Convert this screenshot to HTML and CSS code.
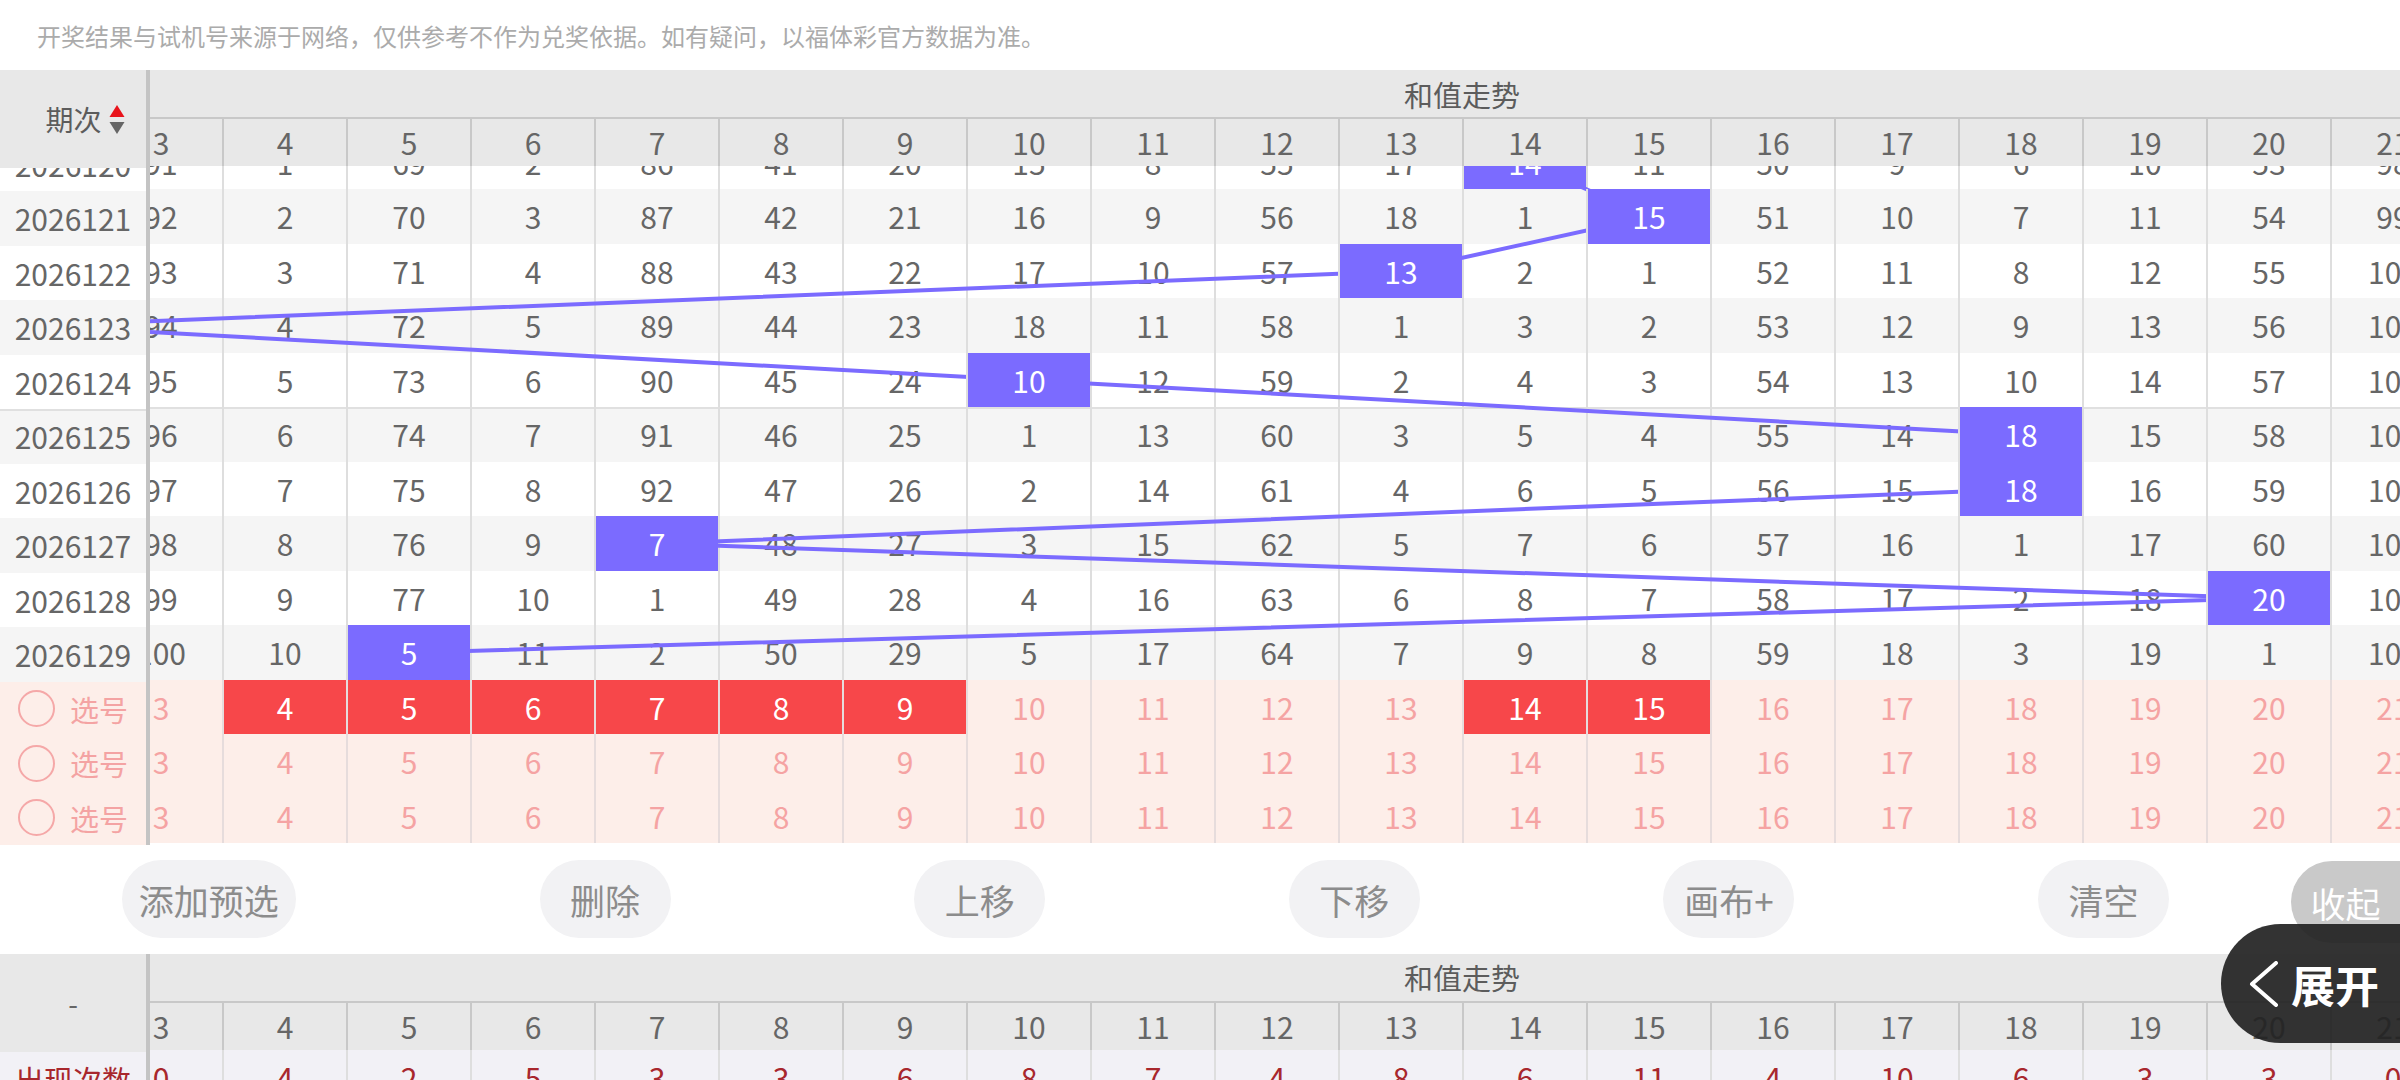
FILE: index.html
```html
<!DOCTYPE html>
<html lang="zh-CN">
<head>
<meta charset="utf-8">
<title>和值走势</title>
<link rel="stylesheet" href="styles.css">
</head>
<body>
<div class="notice">开奖结果与试机号来源于网络，仅供参考不作为兑奖依据。如有疑问，以福体彩官方数据为准。</div>

<section class="trend">
  <div class="fixed">
    <div class="fhead">
      <span class="ftitle">期次</span>
      <svg class="sort" width="16" height="30" viewBox="0 0 16 30"><polygon points="8,0 15.5,12 0.5,12" fill="#e8131b"/><polygon points="0.5,17 15.5,17 8,29" fill="#666"/></svg>
    </div>
    <div class="view">
      <div class="rows">
        <div class="fc">2026120</div>
        <div class="fc alt">2026121</div>
        <div class="fc">2026122</div>
        <div class="fc alt">2026123</div>
        <div class="fc">2026124</div>
        <div class="fc alt sep">2026125</div>
        <div class="fc">2026126</div>
        <div class="fc alt">2026127</div>
        <div class="fc">2026128</div>
        <div class="fc alt">2026129</div>
        <div class="fc pick"><span class="ring"></span>选号</div>
        <div class="fc pick"><span class="ring"></span>选号</div>
        <div class="fc pick"><span class="ring"></span>选号</div>
      </div>
    </div>
  </div>
  <div class="pane">
    <div class="inner">
      <div class="group">和值走势</div>
      <div class="nums"><i>0</i><i>1</i><i>2</i><i>3</i><i>4</i><i>5</i><i>6</i><i>7</i><i>8</i><i>9</i><i>10</i><i>11</i><i>12</i><i>13</i><i>14</i><i>15</i><i>16</i><i>17</i><i>18</i><i>19</i><i>20</i><i>21</i><i>22</i><i>23</i><i>24</i><i>25</i><i>26</i><i>27</i></div>
      <div class="view">
        <div class="rows">
          <svg class="lines" width="3472" height="545" viewBox="0 0 3472 545"><polyline points="1799,27.25 1923,81.75 1675,136.25 311,190.75 1303,245.25 2295,299.75 2295,354.25 931,408.75 2543,463.25 683,517.75" fill="none" stroke="#7b6bff" stroke-width="4" stroke-linejoin="round"/></svg>
          <div class="r"><i>132</i><i>45</i><i>33</i><i>91</i><i>1</i><i>69</i><i>2</i><i>86</i><i>41</i><i>20</i><i>15</i><i>8</i><i>55</i><i>17</i><i class="h">14</i><i>11</i><i>50</i><i>9</i><i>6</i><i>10</i><i>53</i><i>98</i><i>120</i><i>160</i><i>230</i><i>310</i><i>420</i><i>500</i></div>
          <div class="r alt"><i>133</i><i>46</i><i>34</i><i>92</i><i>2</i><i>70</i><i>3</i><i>87</i><i>42</i><i>21</i><i>16</i><i>9</i><i>56</i><i>18</i><i>1</i><i class="h">15</i><i>51</i><i>10</i><i>7</i><i>11</i><i>54</i><i>99</i><i>121</i><i>161</i><i>231</i><i>311</i><i>421</i><i>501</i></div>
          <div class="r"><i>134</i><i>47</i><i>35</i><i>93</i><i>3</i><i>71</i><i>4</i><i>88</i><i>43</i><i>22</i><i>17</i><i>10</i><i>57</i><i class="h">13</i><i>2</i><i>1</i><i>52</i><i>11</i><i>8</i><i>12</i><i>55</i><i>100</i><i>122</i><i>162</i><i>232</i><i>312</i><i>422</i><i>502</i></div>
          <div class="r alt"><i>135</i><i>48</i><i class="h">2</i><i>94</i><i>4</i><i>72</i><i>5</i><i>89</i><i>44</i><i>23</i><i>18</i><i>11</i><i>58</i><i>1</i><i>3</i><i>2</i><i>53</i><i>12</i><i>9</i><i>13</i><i>56</i><i>101</i><i>123</i><i>163</i><i>233</i><i>313</i><i>423</i><i>503</i></div>
          <div class="r"><i>136</i><i>49</i><i>1</i><i>95</i><i>5</i><i>73</i><i>6</i><i>90</i><i>45</i><i>24</i><i class="h">10</i><i>12</i><i>59</i><i>2</i><i>4</i><i>3</i><i>54</i><i>13</i><i>10</i><i>14</i><i>57</i><i>102</i><i>124</i><i>164</i><i>234</i><i>314</i><i>424</i><i>504</i></div>
          <div class="r alt sep"><i>137</i><i>50</i><i>2</i><i>96</i><i>6</i><i>74</i><i>7</i><i>91</i><i>46</i><i>25</i><i>1</i><i>13</i><i>60</i><i>3</i><i>5</i><i>4</i><i>55</i><i>14</i><i class="h">18</i><i>15</i><i>58</i><i>103</i><i>125</i><i>165</i><i>235</i><i>315</i><i>425</i><i>505</i></div>
          <div class="r"><i>138</i><i>51</i><i>3</i><i>97</i><i>7</i><i>75</i><i>8</i><i>92</i><i>47</i><i>26</i><i>2</i><i>14</i><i>61</i><i>4</i><i>6</i><i>5</i><i>56</i><i>15</i><i class="h">18</i><i>16</i><i>59</i><i>104</i><i>126</i><i>166</i><i>236</i><i>316</i><i>426</i><i>506</i></div>
          <div class="r alt"><i>139</i><i>52</i><i>4</i><i>98</i><i>8</i><i>76</i><i>9</i><i class="h">7</i><i>48</i><i>27</i><i>3</i><i>15</i><i>62</i><i>5</i><i>7</i><i>6</i><i>57</i><i>16</i><i>1</i><i>17</i><i>60</i><i>105</i><i>127</i><i>167</i><i>237</i><i>317</i><i>427</i><i>507</i></div>
          <div class="r"><i>140</i><i>53</i><i>5</i><i>99</i><i>9</i><i>77</i><i>10</i><i>1</i><i>49</i><i>28</i><i>4</i><i>16</i><i>63</i><i>6</i><i>8</i><i>7</i><i>58</i><i>17</i><i>2</i><i>18</i><i class="h">20</i><i>106</i><i>128</i><i>168</i><i>238</i><i>318</i><i>428</i><i>508</i></div>
          <div class="r alt"><i>141</i><i>54</i><i>6</i><i>100</i><i>10</i><i class="h">5</i><i>11</i><i>2</i><i>50</i><i>29</i><i>5</i><i>17</i><i>64</i><i>7</i><i>9</i><i>8</i><i>59</i><i>18</i><i>3</i><i>19</i><i>1</i><i>107</i><i>129</i><i>169</i><i>239</i><i>319</i><i>429</i><i>509</i></div>
          <div class="r pick"><i>0</i><i>1</i><i>2</i><i>3</i><i class="s">4</i><i class="s">5</i><i class="s">6</i><i class="s">7</i><i class="s">8</i><i class="s">9</i><i>10</i><i>11</i><i>12</i><i>13</i><i class="s">14</i><i class="s">15</i><i>16</i><i>17</i><i>18</i><i>19</i><i>20</i><i>21</i><i>22</i><i>23</i><i>24</i><i>25</i><i>26</i><i>27</i></div>
          <div class="r pick"><i>0</i><i>1</i><i>2</i><i>3</i><i>4</i><i>5</i><i>6</i><i>7</i><i>8</i><i>9</i><i>10</i><i>11</i><i>12</i><i>13</i><i>14</i><i>15</i><i>16</i><i>17</i><i>18</i><i>19</i><i>20</i><i>21</i><i>22</i><i>23</i><i>24</i><i>25</i><i>26</i><i>27</i></div>
          <div class="r pick"><i>0</i><i>1</i><i>2</i><i>3</i><i>4</i><i>5</i><i>6</i><i>7</i><i>8</i><i>9</i><i>10</i><i>11</i><i>12</i><i>13</i><i>14</i><i>15</i><i>16</i><i>17</i><i>18</i><i>19</i><i>20</i><i>21</i><i>22</i><i>23</i><i>24</i><i>25</i><i>26</i><i>27</i></div>
        </div>
      </div>
    </div>
  </div>
</section>

<div class="toolbar">
  <div class="btns">
    <span class="btn">添加预选</span>
    <span class="btn">删除</span>
    <span class="btn">上移</span>
    <span class="btn">下移</span>
    <span class="btn">画布+</span>
    <span class="btn">清空</span>
  </div>
  <span class="btn fold">收起</span>
</div>

<section class="trend stats">
  <div class="fixed">
    <div class="fhead dash">-</div>
    <div class="fc count">出现次数</div>
  </div>
  <div class="pane">
    <div class="inner">
      <div class="group">和值走势</div>
      <div class="nums"><i>0</i><i>1</i><i>2</i><i>3</i><i>4</i><i>5</i><i>6</i><i>7</i><i>8</i><i>9</i><i>10</i><i>11</i><i>12</i><i>13</i><i>14</i><i>15</i><i>16</i><i>17</i><i>18</i><i>19</i><i>20</i><i>21</i><i>22</i><i>23</i><i>24</i><i>25</i><i>26</i><i>27</i></div>
      <div class="r count"><i>0</i><i>0</i><i>1</i><i>0</i><i>4</i><i>2</i><i>5</i><i>3</i><i>3</i><i>6</i><i>8</i><i>7</i><i>4</i><i>8</i><i>6</i><i>11</i><i>4</i><i>10</i><i>6</i><i>3</i><i>3</i><i>0</i><i>0</i><i>0</i><i>0</i><i>0</i><i>0</i><i>0</i></div>
    </div>
  </div>
</section>

<div class="fab">
  <svg width="30" height="46" viewBox="0 0 30 46"><polyline points="27,2 3,23 27,44" fill="none" stroke="#fff" stroke-width="4" stroke-linecap="round" stroke-linejoin="round"/></svg>
  <span>展开</span>
</div>
</body>
</html>
```

FILE: styles.css
```css
* { box-sizing: border-box; }

html, body { margin: 0; padding: 0; }

body {
  width: 2400px;
  height: 1080px;
  overflow: hidden;
  position: relative;
  background: #fff;
  font-family: "Noto Sans CJK SC", "Noto Sans", sans-serif;
  color: #666;
}

.notice {
  height: 70px;
  padding-left: 37px;
  display: flex;
  align-items: center;
  font-size: 24px;
  color: #ababab;
}

/* ---------- trend table ---------- */
.trend {
  display: flex;
}

.fixed {
  width: 150px;
  flex: none;
  border-right: 4px solid #c4c4c4;
  position: relative;
  z-index: 3;
  background: #fff;
}

.fhead {
  height: 98px;
  background: #e8e8e8;
  display: flex;
  align-items: center;
  justify-content: center;
  padding-left: 24px;
  gap: 7px;
}

.ftitle {
  font-size: 28px;
  color: #5c5c5c;
}

.sort { display: block; margin-top: 2px; }

.view {
  height: 677px;
  overflow: hidden;
}

.rows {
  margin-top: -31.5px;
  position: relative;
}

.fc {
  height: 54.5px;
  display: flex;
  align-items: center;
  justify-content: center;
  font-size: 30px;
  color: #666;
  background: #fff;
}

.alt { background: #f5f5f5; }

.sep { box-shadow: inset 0 2px 0 #e0e0e0; }

.fc.pick {
  background: #fdeee9;
  color: #f4a3a3;
  font-size: 29px;
  justify-content: flex-start;
  padding-left: 18px;
  gap: 15px;
}

.ring {
  width: 37px;
  height: 37px;
  border-radius: 50%;
  border: 2px solid #f5a8a8;
}

.pane {
  flex: 1;
  overflow: hidden;
}

.inner {
  width: 3472px;
  margin-left: -424px;
}

.group {
  height: 49px;
  background: #e8e8e8;
  border-bottom: 2px solid #c8c8c8;
  display: flex;
  align-items: center;
  justify-content: center;
  font-size: 29px;
  color: #5c5c5c;
}

.nums, .r {
  display: grid;
  grid-template-columns: repeat(28, 124px);
}

.nums {
  height: 47px;
  background: #e8e8e8;
}

.nums i, .r i {
  font-style: normal;
  text-align: center;
  font-size: 30px;
}

.nums i {
  line-height: 47px;
  border-left: 2px solid #c8c8c8;
  color: #666;
}

.r {
  height: 54.5px;
  background: #fff;
}

.r.alt { background: #f5f5f5; }

.r i {
  line-height: 54.5px;
  border-left: 2px solid #dedede;
  color: #666;
}

.r i.h {
  background: #7b6bff;
  color: #fff;
  position: relative;
  z-index: 2;
}

.r.pick { background: #fdeee9; }

.r.pick i {
  color: #f5a3a3;
  border-left-color: #e6dcdc;
}

.r.pick i.s {
  background: #f7474a;
  color: #fff;
}

.lines {
  position: absolute;
  left: 0;
  top: 0;
  z-index: 1;
  pointer-events: none;
}

/* ---------- toolbar ---------- */
.toolbar {
  height: 108.5px;
  display: flex;
  align-items: center;
}

.btns {
  flex: 1;
  display: flex;
  justify-content: space-around;
  align-items: center;
}

.btn {
  height: 78px;
  min-width: 131px;
  padding: 0 17px;
  border-radius: 39px;
  background: #f2f2f4;
  color: #8c8c8c;
  font-size: 35px;
  display: flex;
  align-items: center;
  justify-content: center;
}

.btn.fold {
  flex: none;
  width: 109px;
  min-width: 0;
  height: 82px;
  margin-top: 6px;
  padding: 0;
  border-radius: 41px 0 0 41px;
  background: #c9c9c9;
  color: #fff;
}

/* ---------- stats ---------- */
.stats .fixed { background: #e8e8e8; }

.fhead.dash {
  padding-left: 0;
  font-size: 28px;
  color: #666;
}

.stats .fhead { height: 98px; }

.fc.count, .r.count {
  background: #f2f1f6;
  color: #a8272d;
}

.fc.count { font-size: 29px; }

.r.count i { color: #a8272d; }

/* ---------- floating expand ---------- */
.fab {
  position: absolute;
  right: 0;
  top: 924px;
  width: 179px;
  height: 119px;
  border-radius: 60px 0 0 60px;
  background: rgba(34, 34, 34, 0.92);
  display: flex;
  align-items: center;
  padding-left: 28px;
  gap: 12px;
  color: #fff;
  z-index: 10;
}

.fab svg { display: block; }

.fab span {
  font-size: 44px;
  font-weight: 700;
  letter-spacing: 0;
}
```
